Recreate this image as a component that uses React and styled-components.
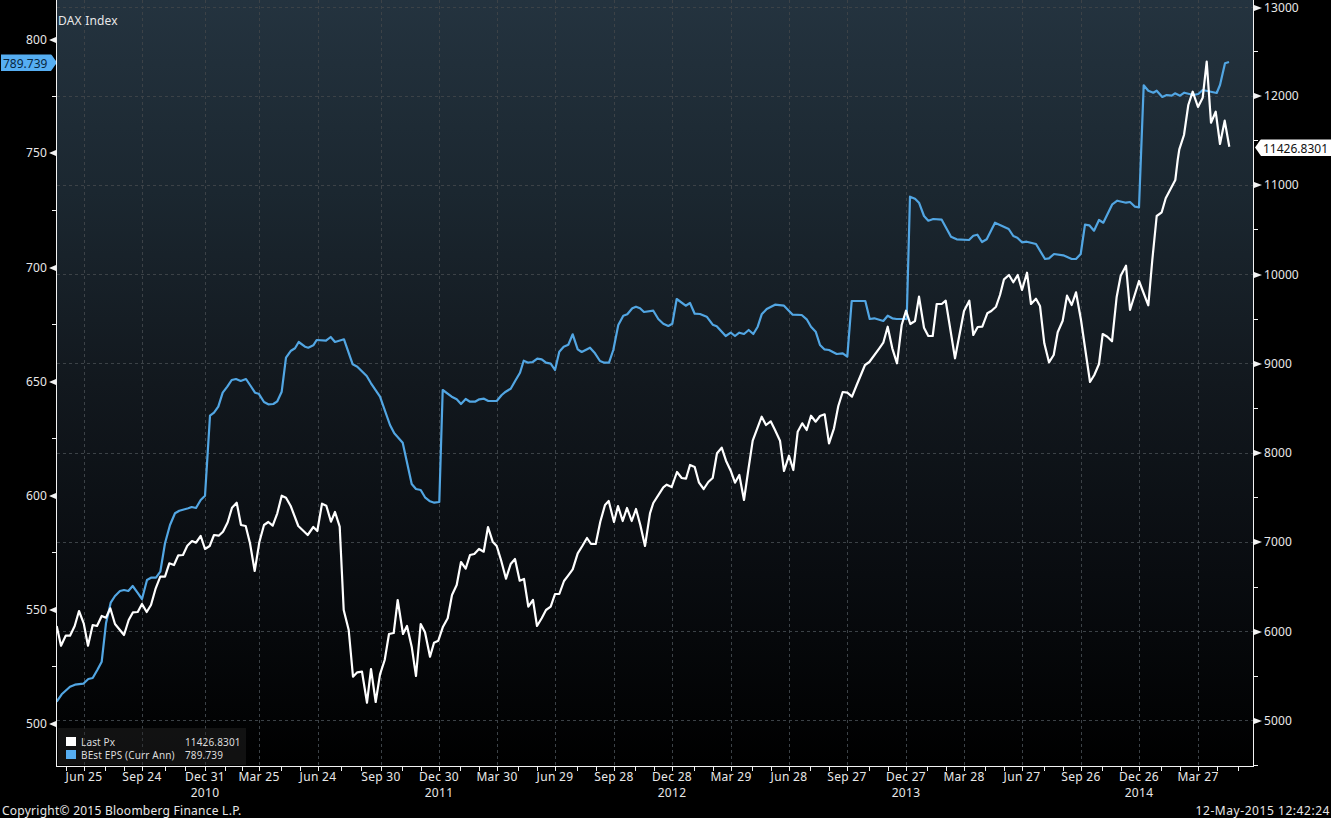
import React from 'react'
import styled, { createGlobalStyle } from 'styled-components'

const GlobalStyle = createGlobalStyle`
    html, body {
        margin: 0;
        padding: 0;
        background: #000;
    }
    body {
        font-family: "Noto Sans", "DejaVu Sans", sans-serif;
        color: #e8e8e8;
    }
`

const Page = styled.div`
    width: 1331px;
    height: 818px;
    overflow: hidden;
    background: #000;
    display: grid;
    grid-template-rows: 767px 36px 15px;
`

const ChartRow = styled.div`
    display: grid;
    grid-template-columns: 56px 1198px 77px;
`

const ValueAxis = styled.div`
    position: relative;
`

const Plot = styled.div`
    position: relative;
    box-sizing: border-box;
    border-left: 1px solid #f2f2f2;
    border-right: 1px solid #f2f2f2;
    border-bottom: 1px solid #f2f2f2;
    background: linear-gradient(to bottom, #24333f 0%, #1b2730 25%, #12181e 50%, #090c10 75%, #000 100%);
`

const PlotSvg = styled.svg`
    display: block;
    width: 1196px;
    height: 766px;
`

const Title = styled.div`
    position: absolute;
    left: 1px;
    top: 14px;
    font-size: 12px;
    line-height: 14px;
    letter-spacing: 0.2px;
`

const Legend = styled.div`
    position: absolute;
    left: 1px;
    bottom: 1px;
    width: 188px;
    height: 37px;
    box-sizing: border-box;
    padding: 7px 5px 0 8px;
    background: rgba(38, 38, 38, 0.45);
    display: grid;
    grid-template-columns: 10px 99px 1fr;
    grid-auto-rows: 13px;
    column-gap: 5px;
    align-items: center;
    font-size: 10px;
    letter-spacing: 0.15px;
    color: #dcdcdc;
    white-space: nowrap;
`

const Swatch = styled.span`
    width: 10px;
    height: 9px;
    background: ${p => p.color};
`

const AxisLabel = styled.span`
    position: absolute;
    font-size: 12px;
    line-height: 14px;
    letter-spacing: 0.1px;
    transform: translateY(-50%);
    ${p => p.side === 'left' ? 'right: 9px;' : 'left: 10px;'}
`

const MajorTick = styled.span`
    position: absolute;
    width: 0;
    height: 0;
    transform: translateY(-50%);
    border-top: 3px solid transparent;
    border-bottom: 3px solid transparent;
    ${p => p.side === 'left'
        ? 'right: 0; border-right: 7px solid #f2f2f2;'
        : 'left: 0; border-left: 8px solid #f2f2f2;'}
`

const MinorTick = styled.span`
    position: absolute;
    width: 4px;
    height: 1px;
    background: #f2f2f2;
    ${p => p.side === 'left' ? 'right: 0;' : 'left: 0;'}
`

const PriceTag = styled.span`
    position: absolute;
    height: 17px;
    line-height: 17px;
    font-size: 12px;
    box-sizing: border-box;
    transform: translateY(-50%);
    white-space: nowrap;
`

const LeftTag = styled(PriceTag)`
    left: 1px;
    width: 56px;
    padding-left: 2px;
    background: #56aef2;
    color: #08263f;
    clip-path: polygon(0 0, 50px 0, 100% 50%, 50px 100%, 0 100%);
`

const RightTag = styled(PriceTag)`
    left: 1px;
    width: 76px;
    padding-left: 8px;
    background: #fff;
    color: #111;
    clip-path: polygon(6px 0, 100% 0, 100% 100%, 6px 100%, 0 50%);
`

const TimeAxis = styled.div`
    position: relative;
`

const TimeTick = styled.span`
    position: absolute;
    top: 0;
    width: 1px;
    height: 4px;
    background: #f2f2f2;
`

const TimeLabel = styled.span`
    position: absolute;
    top: ${p => p.row === 'year' ? '19px' : '3px'};
    font-size: 12px;
    line-height: 14px;
    letter-spacing: 0.3px;
    transform: translateX(-50%);
    white-space: nowrap;
`

const Footer = styled.div`
    display: flex;
    justify-content: space-between;
    align-items: center;
    padding: 0 1px 0 2px;
    font-size: 12px;
    line-height: 15px;
`

const Copyright = styled.span`
    letter-spacing: 0.25px;
`

const Stamp = styled.span`
    letter-spacing: 0.55px;
`

const leftTicks = [
    { label: '800', y: 39.5 },
    { label: '750', y: 153 },
    { label: '700', y: 267.5 },
    { label: '650', y: 381.5 },
    { label: '600', y: 495.5 },
    { label: '550', y: 609.5 },
    { label: '500', y: 723.5 },
]
const leftMinor = [96, 210, 324, 438, 552, 666]

const rightTicks = [
    { label: '13000', y: 7.5 },
    { label: '12000', y: 96 },
    { label: '11000', y: 185 },
    { label: '10000', y: 274.5 },
    { label: '9000', y: 363.5 },
    { label: '8000', y: 453 },
    { label: '7000', y: 542 },
    { label: '6000', y: 631.5 },
    { label: '5000', y: 720.5 },
]
const rightMinor = [51, 140, 229, 319, 408, 497, 587, 676, 765]

const quarters = [
    { label: 'Jun 25', x: 84 },
    { label: 'Sep 24', x: 142 },
    { label: 'Dec 31', x: 205, year: '2010' },
    { label: 'Mar 25', x: 259 },
    { label: 'Jun 24', x: 318 },
    { label: 'Sep 30', x: 381 },
    { label: 'Dec 30', x: 439, year: '2011' },
    { label: 'Mar 30', x: 497 },
    { label: 'Jun 29', x: 555 },
    { label: 'Sep 28', x: 614 },
    { label: 'Dec 28', x: 672, year: '2012' },
    { label: 'Mar 29', x: 731 },
    { label: 'Jun 28', x: 789 },
    { label: 'Sep 27', x: 847 },
    { label: 'Dec 27', x: 906, year: '2013' },
    { label: 'Mar 28', x: 964 },
    { label: 'Jun 27', x: 1022 },
    { label: 'Sep 26', x: 1081 },
    { label: 'Dec 26', x: 1139, year: '2014' },
    { label: 'Mar 27', x: 1198 },
]

// monthly ticks between the labelled quarters
const monthTicks = [66, 1217, 1238].concat(
    quarters.flatMap((q, i) => {
        const next = quarters[i + 1]
        if (!next) return [q.x]
        const gap = next.x - q.x
        return [q.x, Math.round(q.x + gap * 0.37), Math.round(q.x + gap * 0.69)]
    })
)

const lastPx = `56.7,626 61,645.7 65.7,635.7 70,635.7 74.7,626 79,611 83.7,623.3 88,645.7 92.7,625 97,626 101.7,616 106,617.7 110.3,608.3 115,624 124,635 128.7,620 133,612.3 137.7,612 142,604 146.7,612 151,605 155.7,588.3 160.3,576.7 165,576.7 169.3,563.3 174,565 178.3,555.3 183,555 187.3,545.7 192,541 196,542.7 200.7,536 205,549 209.7,546 214,535 218.7,535.7 223,531.7 227.7,522.3 232,507.7 236.7,502.7 241,525 245.7,526 250,543.3 254.7,571 259.3,542.3 264,525 268.3,522 272.7,525.7 277.3,513.3 281.7,495.7 286,497.7 290.7,506 298.3,526 307.7,535 313.3,527 317.3,531 322,503.7 326.3,505.7 331,521.7 335,512 339.7,526.7 343.7,610 348.7,630 353,676.7 357.3,672.3 362,671.7 367,702.7 371,669 375.7,702 380,674.3 384.7,660 389,634 393.7,633 397.7,600 403,634 407,626 411.7,646.7 416,676 420.7,624 425,632.3 430,656.7 434,642.7 438.3,640.7 443,626.7 447.7,618.3 452,595 456.7,585 461,562 465.7,568.7 470,555 474.3,554 479,549 483.7,551.7 488,527 492.7,541.7 496.7,546 501,560 506,578.7 510.7,564 515,559 519.7,580.7 524,579 528.3,606.7 533,600 537,626 541.7,618.3 546,610 550.7,606.7 555,594 559.3,594 564,581 568.3,575.3 572.7,569.3 577.7,553.3 582.3,546 587,538 591,544 595.7,544 600.3,521.7 605,505 608.7,501 614,522 618,506 622.7,521 627,508 631.7,521 636,509 640.3,525 645,546 650,513.3 653.3,503 663.3,487.3 666.7,484.7 671.7,487 677,472 681.7,478 686,478.7 690,465 694.7,467 699,482.7 703.7,489 708.3,482 712.7,478 717,453.3 721.7,447.7 726,460.7 730.7,470.7 735,482.7 739.3,475 744,500 748.3,470 752.7,440.7 761.7,416.7 766,425 770.7,421.3 775,430 780,440.7 784,471 789,455.7 793.3,470 797.7,431.7 802.3,423.3 806.7,430 811,415.7 815.7,421.7 820,416 824.7,414.3 829,443.3 834,428.3 838.3,406 842.7,392 847.3,392.7 852,396.7 856.7,385 865,365 869.3,362 879.3,348.3 883.3,342.7 887.7,326.7 892.3,348.3 897,363.3 901.7,325 906,310.7 910.3,324 915,321 919,296.7 924,327.7 928.3,336 932.7,336 936.7,304 941.7,304 945.7,300.7 955,358.3 964,311 969.3,300.7 973.3,335 977.7,327 982.3,326.7 987.3,313.3 991.3,311 996,306.7 1000,295 1004,279.3 1009,275 1013.3,282.3 1017.7,275 1022,290 1027,272.7 1031,304 1036,298.7 1040,306 1044.3,343.3 1049,362.3 1053.7,355 1057.7,332.3 1062.7,320.7 1067,295.7 1071.7,305 1076,292.3 1081,320 1090,382 1094.3,375 1099,364 1102.7,334 1107.3,336.7 1112,341.3 1116.7,296.7 1120.7,275.7 1126,265.7 1130,310 1139,281 1148.3,305.3 1152.3,260 1156.7,216 1161.7,212.3 1165.7,198.3 1175.3,180 1177.7,160 1179.3,149.3 1184,135 1188.3,105 1192.7,91.7 1198,107 1202.7,97.7 1206.7,61.7 1211,122.7 1215.7,111.7 1220,144 1224.7,120.7 1229.3,146.7`

const bestEps = `56.7,701.7 61.7,694.3 70,686.7 75,684.7 83.3,683.7 88.3,679 92.7,678 97.3,670 101.7,661.7 106,623.3 110.7,602.7 115,596 120,591 124,590 128.3,591 132.7,586 137.3,592.3 142,599 147,580 151,577.7 156,577.7 160.3,571.7 165,543.3 170,525 175,513.3 179.3,510.7 188.3,508.3 191.7,507 196,508 200.7,500 205,495.7 210,415.7 214,412.7 218.3,406.7 222.7,392.7 227.3,386.7 231.7,380 236,379 240.7,381 246,379 250.7,386 255,392.7 258.7,393.7 264,402 268.3,404.3 273.3,404 277.3,401.3 281.7,391.7 286,357.7 291,350.7 295,348.3 298.7,342 305,346.7 308.3,347.7 313.3,345.3 316.7,340 326,340.7 330.7,337 335,342 344,339.3 352.7,364.3 357.3,366.7 366.7,376 371,383.3 380,396.7 390,425 394.3,433.3 402.7,442.7 411.7,484 416,489 420.7,490 425,497.3 430,501.3 434.3,502.7 439.3,502 442.7,390 451.7,396.7 456.7,399.3 461,404 465.7,399 470,401.7 475,401.7 479.3,399.3 484,398.7 488.3,401 496.7,401 501.7,395 505.7,391.7 510.7,388.7 515.7,380 520,372.7 523.7,360.7 528.3,362.7 532.7,362 537.3,358.7 541.7,359.3 546,362.7 550.7,363.7 555,370 559.3,351.7 563.7,346.7 568.3,344.7 572.7,334.3 577.7,349.3 581.7,352 590,347.7 595,353.3 600,361 604.3,362.7 609,362.7 613.3,350 618.3,325 623.3,315.7 627.3,314.3 632.3,308.3 636,306.7 640,308.3 644,312 653.3,310.7 658.3,319 663.3,323.7 668.3,326 672.3,323.7 676.7,299 685.7,305.7 690,303 694.7,313.7 700,314 706.7,316.7 712.7,324.7 716.7,326.3 725.7,336 730.7,332.7 735,336 739.3,332.7 744,334 748.7,330 753.3,334 757.7,326.7 761.7,314.3 766.7,309 775,304.7 784,305.7 792.7,314.7 801.7,315 806.7,319.3 811,326.7 815.7,331.7 820,345 824.3,349.3 829,350 836.7,354 842.7,353.3 847.3,356.7 851.7,301 865.3,301 869.7,319 874.3,318.3 883.3,321 887.7,315.7 892.3,318.3 896.7,319 906.7,319 910,196.7 915,198.7 919,202.7 924,216 928.3,220.7 933.3,219 941.7,219.7 951,236.7 956.7,239.3 969,240 973.3,235.7 977.3,234.7 982,242 986.7,239.3 995,222.7 1008.7,229 1013.3,236 1017.3,237.7 1022,242.3 1026.7,241.7 1036,244 1045,259 1049,258.3 1054,254 1063.3,255.3 1071.7,259 1076,259 1080.7,254 1085,224.7 1089.3,225.3 1094,230.7 1099,220 1103.3,222.7 1112.3,204.3 1117.3,200.7 1126,202.7 1130,202 1135,206.7 1139,207.3 1143.7,85.3 1148.3,90.7 1153.3,92.7 1156.7,90.7 1162.3,97 1166.7,95 1171.7,95.7 1175,93.3 1180,95.7 1184.3,92.7 1193.3,95 1198.3,94 1202.7,90 1216.7,93 1220,85 1225,63.3 1229,62`

const App = () => {
    return (
        <Page>
            <GlobalStyle />
            <ChartRow>
                <ValueAxis>
                    {leftTicks.map(t => (
                        <React.Fragment key={t.label}>
                            <AxisLabel side="left" style={{ top: t.y }}>{t.label}</AxisLabel>
                            <MajorTick side="left" style={{ top: t.y }} />
                        </React.Fragment>
                    ))}
                    {leftMinor.map(y => <MinorTick key={y} side="left" style={{ top: y }} />)}
                    <LeftTag style={{ top: 62.5 }}>789.739</LeftTag>
                </ValueAxis>

                <Plot>
                    <PlotSvg viewBox="57 0 1196 766">
                        <g stroke="#3c4247" strokeDasharray="3 3" shapeRendering="crispEdges">
                            {rightTicks.map(t => <line key={t.label} x1="57" x2="1253" y1={t.y} y2={t.y} />)}
                            {quarters.map(q => <line key={q.label + q.x} x1={q.x} x2={q.x} y1="0" y2="766" />)}
                        </g>
                        <polyline points={bestEps} fill="none" stroke="#52a6e3" strokeWidth="2.2" strokeLinejoin="round" />
                        <polyline points={lastPx} fill="none" stroke="#fff" strokeWidth="2.2" strokeLinejoin="round" />
                    </PlotSvg>
                    <Title>DAX Index</Title>
                    <Legend>
                        <Swatch color="#fff" />
                        <span>Last Px</span>
                        <span>11426.8301</span>
                        <Swatch color="#56aef2" />
                        <span>BEst EPS (Curr Ann)</span>
                        <span>789.739</span>
                    </Legend>
                </Plot>

                <ValueAxis>
                    {rightTicks.map(t => (
                        <React.Fragment key={t.label}>
                            <AxisLabel side="right" style={{ top: t.y }}>{t.label}</AxisLabel>
                            <MajorTick side="right" style={{ top: t.y }} />
                        </React.Fragment>
                    ))}
                    {rightMinor.map(y => <MinorTick key={y} side="right" style={{ top: y }} />)}
                    <RightTag style={{ top: 147.5 }}>11426.8301</RightTag>
                </ValueAxis>
            </ChartRow>

            <TimeAxis>
                {monthTicks.map(x => <TimeTick key={x} style={{ left: x }} />)}
                {quarters.map(q => (
                    <React.Fragment key={q.label + q.x}>
                        <TimeLabel style={{ left: q.x }}>{q.label}</TimeLabel>
                        {q.year ? <TimeLabel row="year" style={{ left: q.x }}>{q.year}</TimeLabel> : null}
                    </React.Fragment>
                ))}
            </TimeAxis>

            <Footer>
                <Copyright>Copyright© 2015 Bloomberg Finance L.P.</Copyright>
                <Stamp>12-May-2015 12:42:24</Stamp>
            </Footer>
        </Page>
    )
}

export default App
